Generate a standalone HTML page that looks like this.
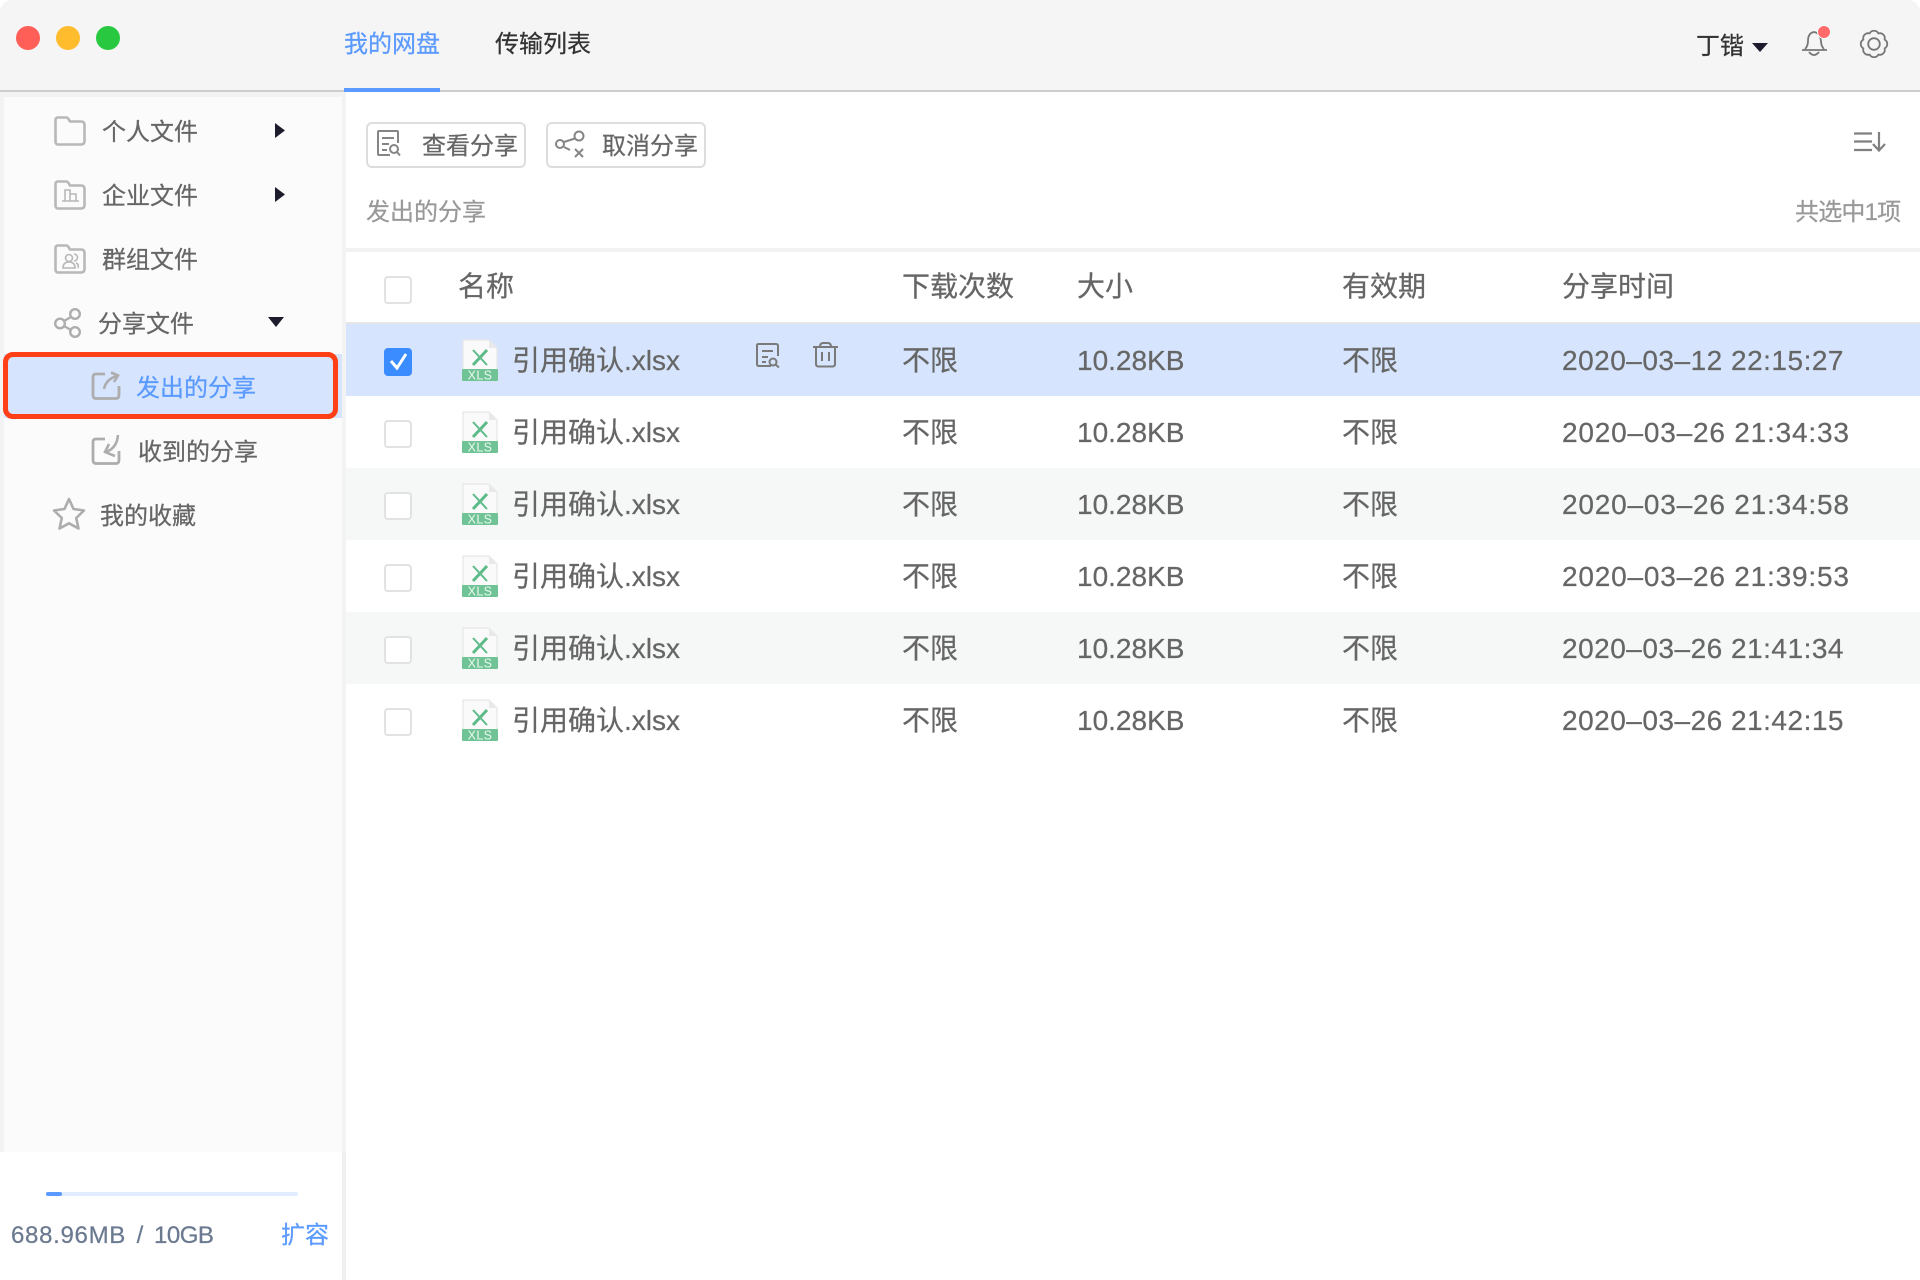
<!DOCTYPE html>
<html lang="zh"><head><meta charset="utf-8"><title>我的网盘</title>
<style>
html,body{margin:0;padding:0;width:1920px;height:1280px;overflow:hidden;background:#fff}
body{position:relative;font-family:"Liberation Sans","Noto Sans CJK SC",sans-serif;-webkit-font-smoothing:antialiased}
.a{position:absolute}
.t{position:absolute;white-space:nowrap;line-height:40px;height:40px;font-size:24px;color:#666;-webkit-text-stroke:.25px currentColor}
.r{position:absolute;left:346px;width:1574px;height:72px}
.c{font-size:28px;color:#666}
.cb{position:absolute;left:384px;width:24px;height:24px;border:2px solid #e2e2e2;border-radius:4px;background:#fff}
svg{position:absolute;left:0;top:0;overflow:visible}
</style></head><body>
<div class="a" style="left:0;top:0;width:1920px;height:1280px;border-radius:12px 12px 10px 10px;overflow:hidden;background:#fff">
<div class="a" style="left:0;top:0;width:1920px;height:90px;background:#f5f5f5"></div>
<div class="a" style="left:0;top:90px;width:1920px;height:2px;background:#cdcdcd"></div>
<div class="a" style="left:344px;top:88px;width:96px;height:4px;background:#5b9aff"></div>
<div class="a" style="left:0;top:92px;width:346px;height:1060px;background:#f3f3f3"></div>
<div class="a" style="left:4px;top:97px;width:338px;height:1055px;background:#fbfbfb"></div>
<div class="a" style="left:0;top:1152px;width:342px;height:128px;background:#fff"></div>
<div class="a" style="left:342px;top:1152px;width:4px;height:128px;background:#f0f0f0"></div>
<div class="a" style="left:4px;top:354px;width:338px;height:64px;background:#d6e5fd"></div>
<div class="a" style="left:3px;top:352px;width:325px;height:57px;border:5px solid #ff4016;border-radius:10px"></div>
<div class="a" style="left:346px;top:248px;width:1574px;height:4px;background:#f2f2f2"></div>
<div class="a" style="left:346px;top:322px;width:1574px;height:2px;background:#e6e6e6"></div>
<div class="r" style="top:324px;background:#d6e5fd"></div>
<div class="r" style="top:468px;background:#f6f8f7"></div>
<div class="r" style="top:612px;background:#f6f8f7"></div>
<div class="a" style="left:46px;top:1192px;width:252px;height:4px;border-radius:2px;background:#e1ecff"></div>
<div class="a" style="left:46px;top:1192px;width:16px;height:4px;border-radius:2px;background:#5b9aff"></div>

<span class="t" style="left:344px;top:25px;color:#5b9aff">我的网盘</span>
<span class="t" style="left:495px;top:25px;color:#333">传输列表</span>
<span class="t" style="left:1696px;top:27px;color:#333">丁锴</span>

<span class="t" style="left:102px;top:113px">个人文件</span>
<span class="t" style="left:102px;top:177px">企业文件</span>
<span class="t" style="left:102px;top:241px">群组文件</span>
<span class="t" style="left:98px;top:305px">分享文件</span>
<span class="t" style="left:136px;top:369px;color:#5b9aff">发出的分享</span>
<span class="t" style="left:138px;top:433px">收到的分享</span>
<span class="t" style="left:100px;top:497px">我的收藏</span>

<span class="t" style="left:422px;top:127px">查看分享</span>
<span class="t" style="left:602px;top:127px">取消分享</span>
<span class="t" style="left:366px;top:193px;color:#999">发出的分享</span>
<span class="t" style="left:1795px;top:193px;color:#999;letter-spacing:-.8px">共选中1项</span>

<span class="t c" style="left:458px;top:267px">名称</span>
<span class="t c" style="left:902px;top:267px">下载次数</span>
<span class="t c" style="left:1077px;top:267px">大小</span>
<span class="t c" style="left:1342px;top:267px">有效期</span>
<span class="t c" style="left:1562px;top:267px">分享时间</span>

<div class="cb" style="top:276px"></div>
<div class="cb" style="top:348px;background:#3b8cff;border-color:#3b8cff"></div>
<div class="cb" style="top:420px"></div>
<div class="cb" style="top:492px"></div>
<div class="cb" style="top:564px"></div>
<div class="cb" style="top:636px"></div>
<div class="cb" style="top:708px"></div>

<span class="t c" style="left:512px;top:340.500px">引用确认.xlsx</span><span class="t c" style="left:902px;top:340.500px">不限</span><span class="t c" style="left:1077px;top:340.500px">10.28KB</span><span class="t c" style="left:1342px;top:340.500px">不限</span><span class="t c" style="left:1562px;top:340.500px;letter-spacing:.5px">2020–03–12 22:15:27</span>
<span class="t c" style="left:512px;top:412.500px">引用确认.xlsx</span><span class="t c" style="left:902px;top:412.500px">不限</span><span class="t c" style="left:1077px;top:412.500px">10.28KB</span><span class="t c" style="left:1342px;top:412.500px">不限</span><span class="t c" style="left:1562px;top:412.500px;letter-spacing:.8px">2020–03–26 21:34:33</span>
<span class="t c" style="left:512px;top:484.500px">引用确认.xlsx</span><span class="t c" style="left:902px;top:484.500px">不限</span><span class="t c" style="left:1077px;top:484.500px">10.28KB</span><span class="t c" style="left:1342px;top:484.500px">不限</span><span class="t c" style="left:1562px;top:484.500px;letter-spacing:.8px">2020–03–26 21:34:58</span>
<span class="t c" style="left:512px;top:556.500px">引用确认.xlsx</span><span class="t c" style="left:902px;top:556.500px">不限</span><span class="t c" style="left:1077px;top:556.500px">10.28KB</span><span class="t c" style="left:1342px;top:556.500px">不限</span><span class="t c" style="left:1562px;top:556.500px;letter-spacing:.8px">2020–03–26 21:39:53</span>
<span class="t c" style="left:512px;top:628.500px">引用确认.xlsx</span><span class="t c" style="left:902px;top:628.500px">不限</span><span class="t c" style="left:1077px;top:628.500px">10.28KB</span><span class="t c" style="left:1342px;top:628.500px">不限</span><span class="t c" style="left:1562px;top:628.500px;letter-spacing:.5px">2020–03–26 21:41:34</span>
<span class="t c" style="left:512px;top:700.500px">引用确认.xlsx</span><span class="t c" style="left:902px;top:700.500px">不限</span><span class="t c" style="left:1077px;top:700.500px">10.28KB</span><span class="t c" style="left:1342px;top:700.500px">不限</span><span class="t c" style="left:1562px;top:700.500px;letter-spacing:.5px">2020–03–26 21:42:15</span>

<span class="t" style="left:11px;top:1216px;color:#6b7a90;word-spacing:4px"><span style="letter-spacing:.7px">688.96MB</span> / <span style="letter-spacing:-.5px">10GB</span></span>
<span class="t" style="left:281px;top:1216px;color:#5b9aff">扩容</span>

<div class="a" style="left:366px;top:122px;width:156px;height:42px;border:2px solid #ddd;border-radius:6px"></div>
<div class="a" style="left:546px;top:122px;width:156px;height:42px;border:2px solid #ddd;border-radius:6px"></div>

<svg width="1920" height="1280" viewBox="0 0 1920 1280" fill="none">
<defs>
<symbol id="file" viewBox="0 0 36 42" width="36" height="42" overflow="visible">
<path d="M1 1H27L35 9V32H1Z" fill="#fafafa" stroke="#e6e6e6" stroke-width="1.2"/>
<path d="M27 1V9H35Z" fill="#e9e9e9"/>
<path d="M11 11L25 26" stroke="#5dbb87" stroke-width="2"/><path d="M25 11L11 26" stroke="#5dbb87" stroke-width="3"/>
<rect x="0" y="30" width="36" height="12" rx="1" fill="#6fc395"/>
<text x="18" y="40.500" text-anchor="middle" font-size="12.500" fill="#e9f8ef" font-family="Liberation Sans" letter-spacing=".4">XLS</text>
</symbol>
<symbol id="folder" viewBox="0 0 32 30" width="32" height="30" overflow="visible">
<path d="M4 1.500H12Q13.500 1.500 14.500 3L16 5.500H27Q30.500 5.500 30.500 9V25Q30.500 28.500 27 28.500H4Q1.500 28.500 1.500 25V4Q1.500 1.500 4 1.500Z" fill="none" stroke="#b8b8b8" stroke-width="2.600"/>
</symbol>
</defs>
<circle cx="28" cy="38" r="12" fill="#ff5f57"/><circle cx="68" cy="38" r="12" fill="#ffbd2e"/><circle cx="108" cy="38" r="12" fill="#28c840"/>

<use href="#folder" x="54" y="116"/>
<use href="#folder" x="54" y="180"/>
<path d="M63 201H73M65 201V190H70V201M70 194H76V201M62 201H79" stroke="#b8b8b8" stroke-width="1.600"/>
<use href="#folder" x="54" y="244"/>
<circle cx="69" cy="258" r="3.500" stroke="#b8b8b8" stroke-width="1.600"/><path d="M63 268Q63 262 69 262Q75 262 75 268Z" stroke="#b8b8b8" stroke-width="1.600"/><path d="M74 254a3.500 3.500 0 0 1 0 7M76 263Q79 264 78 268" stroke="#b8b8b8" stroke-width="1.600"/>

<path d="M71 317L64 321M64 326L71 330" stroke="#adadad" stroke-width="2.400"/>
<circle cx="75" cy="314" r="4.800" stroke="#adadad" stroke-width="2.400"/><circle cx="60" cy="323.500" r="4.800" stroke="#adadad" stroke-width="2.400"/><circle cx="75" cy="332" r="4.800" stroke="#adadad" stroke-width="2.400"/>

<path d="M105 374H96Q93 374 93 377V395Q93 398.500 96 398.500H116Q119 398.500 119 395V386" stroke="#adadad" stroke-width="2.800"/>
<path d="M104 389Q106 379 117 376M111 372.500L118 375.500L114 382" stroke="#adadad" stroke-width="2.600"/>
<path d="M105 439H96Q93 439 93 442V460Q93 463.500 96 463.500H116Q119 463.500 119 460V451" stroke="#adadad" stroke-width="2.800"/>
<path d="M118 435Q117 448 106 452M115 456L105 452L109 444" stroke="#adadad" stroke-width="2.600"/>
<path d="M69 499L73.500 509L84 510.500L76.200 518L78.500 528.500L69 523.300L59.500 528.500L61.800 518L54 510.500L64.500 509Z" stroke="#adadad" stroke-width="2.600" stroke-linejoin="round"/>

<path d="M275 123L285 130.500L275 138Z" fill="#1c1c2e"/><path d="M275 187L285 194.500L275 202Z" fill="#1c1c2e"/>
<path d="M268 317H284L276 327Z" fill="#1c1c2e"/>
<path d="M1752 43H1768L1760 52Z" fill="#1c1c2e"/>

<path d="M1805 49Q1808 46 1808 41Q1808 33 1814 32Q1820 33 1821 41Q1821 46 1824 49M1802 50H1827M1809 52Q1814 58 1819 52" stroke="#777" stroke-width="1.800"/>
<circle cx="1824" cy="32" r="7" fill="#fff"/><circle cx="1824" cy="32" r="6" fill="#ff6b6b"/>
<path d="M1878.400 33.400A5 5 0 0 1 1884.600 39.600A5 5 0 0 1 1884.600 48.400A5 5 0 0 1 1878.400 54.600A5 5 0 0 1 1869.600 54.600A5 5 0 0 1 1863.400 48.400A5 5 0 0 1 1863.400 39.600A5 5 0 0 1 1869.600 33.400A5 5 0 0 1 1878.400 33.400Z" stroke="#777" stroke-width="1.800" stroke-linejoin="round"/>
<circle cx="1874" cy="44" r="5.800" stroke="#777" stroke-width="1.800"/>

<path d="M1854 133.500H1872M1854 141.500H1872M1854 150H1872" stroke="#808080" stroke-width="2.200"/>
<path d="M1879 132V150M1873 144L1879 150.500L1885 144" stroke="#808080" stroke-width="2.200"/>

<path d="M390 155H379Q378 155 378 154V132Q378 131 379 131H397Q398 131 398 132V143M382 138H394M382 144H389M382 150H387" stroke="#858585" stroke-width="2"/>
<circle cx="394" cy="149" r="4" stroke="#858585" stroke-width="2"/><path d="M397 152L400 155.500" stroke="#858585" stroke-width="2"/>
<circle cx="579" cy="136" r="4.500" stroke="#858585" stroke-width="2"/><circle cx="560" cy="144" r="4" stroke="#858585" stroke-width="2"/>
<path d="M575 138.500L564 142M564 147L570 150M575 149L583 157M583 149L575 157" stroke="#858585" stroke-width="2"/>

<use href="#file" x="462" y="339"/><use href="#file" x="462" y="411"/><use href="#file" x="462" y="483"/><use href="#file" x="462" y="555"/><use href="#file" x="462" y="627"/><use href="#file" x="462" y="699"/>

<path d="M391 361L397 368L406 354" stroke="#fff" stroke-width="3"/>

<path d="M771 366H759Q757 366 757 364V345Q757 344 759 344H776Q778 344 778 346V356M762 351H773M762 357H768M762 362H766" stroke="#7a7a7a" stroke-width="2"/>
<circle cx="773" cy="362" r="3.500" stroke="#7a7a7a" stroke-width="2"/><path d="M775.500 364.500L779 367.500" stroke="#7a7a7a" stroke-width="2"/>
<path d="M813 347H838M820 347Q820 343 823 343H828Q831 343 831 347M816 347V364Q816 366.500 818.500 366.500H832.500Q835 366.500 835 364V347M822 352V361M829 352V361" stroke="#7a7a7a" stroke-width="2"/>
</svg>
</div>
</body></html>
